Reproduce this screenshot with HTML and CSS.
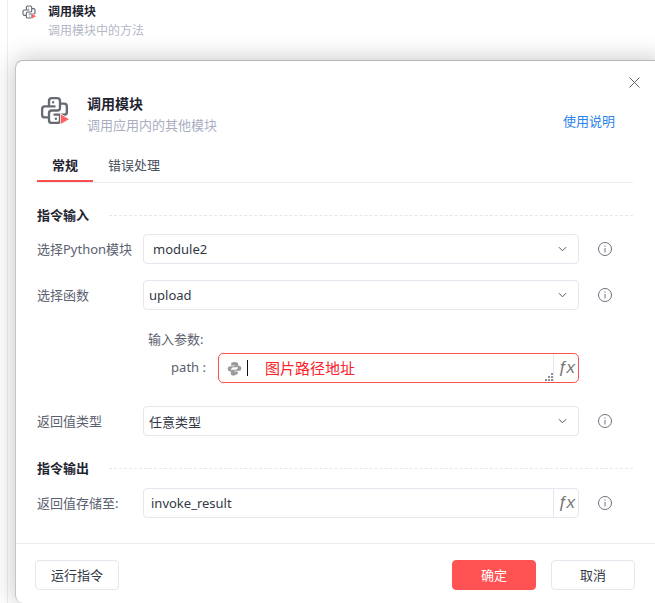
FILE: index.html
```html
<!DOCTYPE html>
<html lang="zh-CN">
<head>
<meta charset="utf-8">
<title>调用模块</title>
<link rel="stylesheet" href="styles.css">
</head>
<body>
<svg class="defs" width="0" height="0" aria-hidden="true">
  <defs>
    <symbol id="py" viewBox="0 0 24 24">
      <path d="M12 9h-7a2 2 0 0 0 -2 2v4a2 2 0 0 0 2 2h3M12 15h7a2 2 0 0 0 2 -2v-4a2 2 0 0 0 -2 -2h-3M8 9v-4a2 2 0 0 1 2 -2h4a2 2 0 0 1 2 2v5a2 2 0 0 1 -2 2h-4a2 2 0 0 0 -2 2v5a2 2 0 0 0 2 2h4a2 2 0 0 0 2 -2v-4M11 6v.01M13 18v.01" fill="none" stroke="#666a73" stroke-width="1.700" stroke-linecap="round" stroke-linejoin="round"/>
      <path d="M16.500 14.800l6 3.500-6 3.500z" fill="#fff" stroke="#fff" stroke-width="1"/>
      <path d="M16.500 14.800l6 3.500-6 3.500z" fill="#fb6464"/>
    </symbol>
    <symbol id="info" viewBox="0 0 14 14">
      <circle cx="7" cy="7" r="6.500" fill="none" stroke="#6c717d" stroke-width="1"/>
      <path d="M7 6v4.500M7 3.500v1.200" fill="none" stroke="#6c717d" stroke-width="1"/>
    </symbol>
    <symbol id="chev" viewBox="0 0 10 6">
      <path d="M1 1l4 4 4-4" fill="none" stroke="#4d5566" stroke-width="1.100"/>
    </symbol>
  </defs>
</svg>
<div class="page">
  <div class="item">
    <svg class="item-icon"><use href="#py"/></svg>
    <div>
      <div class="item-title">调用模块</div>
      <div class="item-sub">调用模块中的方法</div>
    </div>
  </div>
  <section class="modal">
    <svg class="close" viewBox="0 0 11 11"><path d="M.5.5l10 10M10.500.5l-10 10" fill="none" stroke="#666" stroke-width="1"/></svg>
    <div class="body">
      <header class="head">
        <svg class="head-icon"><use href="#py"/></svg>
        <div class="head-text">
          <div class="head-title">调用模块</div>
          <div class="head-sub">调用应用内的其他模块</div>
        </div>
        <a class="help">使用说明</a>
      </header>
      <nav class="tabs">
        <span class="tab active">常规</span>
        <span class="tab">错误处理</span>
      </nav>
      <div class="section first"><span>指令输入</span><i></i></div>
      <div class="row">
        <label class="label">选择Python模块</label>
        <div class="control select indent">module2<svg class="chev"><use href="#chev"/></svg></div>
        <svg class="info"><use href="#info"/></svg>
      </div>
      <div class="row gap">
        <label class="label">选择函数</label>
        <div class="control select">upload<svg class="chev"><use href="#chev"/></svg></div>
        <svg class="info"><use href="#info"/></svg>
      </div>
      <div class="params-title">输入参数:</div>
      <div class="param">
        <label class="param-label">path :</label>
        <div class="param-input">
          <svg class="py-solid" viewBox="0 0 24 24">
            <path d="M12 1.500c-3.600 0-5.400 1.200-5.400 3.200v2.600h5.700v1H5c-2.400 0-3.800 1.400-3.800 3.900 0 2.600 1.300 4.100 3.400 4.100h2.200v-2.700c0-2.100 1.600-3.600 3.600-3.600h4.700c1.700 0 2.900-1.300 2.900-3V4.700c0-2-2.400-3.200-6-3.200z" fill="#9a9a9a"/>
            <path d="M12 22.500c3.600 0 5.400-1.200 5.400-3.200v-2.600h-5.700v-1H19c2.400 0 3.800-1.400 3.800-3.900 0-2.600-1.300-4.100-3.400-4.100h-2.200v2.700c0 2.100-1.600 3.600-3.600 3.600H8.900c-1.700 0-2.900 1.300-2.900 3v3.300c0 2 2.400 3.200 6 3.200z" fill="#9a9a9a"/>
          </svg>
          <span class="caret"></span>
          <span class="red-text">图片路径地址</span>
          <svg class="grip" viewBox="0 0 8 8"><path d="M6 0h2v2H6zM3 3h2v2H3zM6 3h2v2H6zM0 6h2v2H0zM3 6h2v2H3zM6 6h2v2H6z" fill="#8a8f99"/></svg>
          <span class="fx fx-red">ƒx</span>
        </div>
      </div>
      <div class="row gap3">
        <label class="label">返回值类型</label>
        <div class="control select">任意类型<svg class="chev"><use href="#chev"/></svg></div>
        <svg class="info"><use href="#info"/></svg>
      </div>
      <div class="section second"><span>指令输出</span><i></i></div>
      <div class="row close-row">
        <label class="label">返回值存储至:</label>
        <div class="control input">invoke_result<span class="fx">ƒx</span></div>
        <svg class="info"><use href="#info"/></svg>
      </div>
    </div>
    <footer class="footer">
      <button class="btn">运行指令</button>
      <div class="actions">
        <button class="btn primary">确定</button>
        <button class="btn">取消</button>
      </div>
    </footer>
  </section>
</div>
</body>
</html>
```

FILE: styles.css
```css
* { box-sizing: border-box; }
html, body { margin: 0; padding: 0; background: #fff; }
body {
  font-family: "Noto Sans", "Noto Sans CJK SC", sans-serif;
  font-size: 13px;
  color: #333845;
}
.defs { position: absolute; }
.page {
  width: 655px;
  height: 603px;
  overflow: hidden;
  position: relative;
  background: linear-gradient(to right, #fff 7px, #eeeeee 7px, #eeeeee 8px, #fff 8px);
}
.item {
  height: 60px;
  padding: 3px 0 0 21px;
  display: flex;
  gap: 11px;
}
.item-icon { width: 16px; height: 16px; margin-top: 1px; }
.item-title { font-size: 12px; font-weight: 700; line-height: 17px; color: #1f2430; }
.item-sub { font-size: 12px; line-height: 17px; margin-top: 2px; color: #b3b7c6; }

.modal {
  position: relative;
  margin-left: 15px;
  width: 650px;
  height: 543px;
  background: #fff;
  border-radius: 8px;
  border-top: 1px solid #b8b8b8;
  border-left: 1px solid #c4c4c4;
  box-shadow: 0 0 26px rgba(0, 0, 0, .24);
  display: flex;
  flex-direction: column;
}
.close { position: absolute; top: 16px; left: 613px; width: 11px; height: 11px; }
.body { flex: 1; width: 617px; padding-left: 21px; }
.head {
  display: flex;
  padding-top: 33px;
  height: 89px;
}
.head-icon { width: 33px; height: 33px; margin-left: 1px; }
.head-text { margin-left: 16px; flex: 1; }
.head-title { font-size: 14px; font-weight: 700; line-height: 20px; color: #1f2430; }
.head-sub { font-size: 13px; line-height: 18px; margin-top: 2px; color: #a9aebf; }
.help { color: #2c84ea; font-size: 13px; line-height: 18px; margin: 18px 18px 0 0; }

.tabs {
  display: flex;
  height: 33px;
  border-bottom: 1px solid #ececf4;
}
.tab {
  height: 32px;
  width: 56px;
  text-align: center;
  margin-right: 15px;
  line-height: 30px;
  color: #4a505e;
}
.tab:last-child { width: 52px; }
.tab.active { color: #1f2430; font-weight: 700; border-bottom: 2px solid #fd4e4e; }

.section { display: flex; align-items: center; height: 16px; line-height: 16px; font-weight: 700; color: #1f2430; }
.section span { width: 72px; }
.section i { flex: 1; border-top: 1px dashed #e6e7ee; }
.section.first { margin-top: 24px; }
.section.second { margin-top: 24px; }

.row { display: flex; align-items: center; margin-top: 11px; height: 30px; }
.row.close-row { margin-top: 12px; }
.row.gap { margin-top: 16px; }
.row.gap3 { margin-top: 23px; }
.label { width: 106px; padding-bottom: 2px; color: #5b6170; white-space: nowrap; }
.control {
  width: 436px;
  height: 30px;
  border: 1px solid #e6e6ee;
  border-radius: 4px;
  display: flex;
  align-items: center;
  justify-content: space-between;
  color: #333845;
}
.select { padding: 0 11px 0 5px; }
.select.indent { padding-left: 9px; }
.input { padding-left: 7px; }
.chev { width: 9px; height: 6px; }
.info { width: 14px; height: 14px; margin-left: 19px; }

.params-title { margin: 21px 0 0 111px; line-height: 16px; color: #5b6170; }
.param { display: flex; align-items: center; margin-top: 6px; height: 30px; }
.param-label { width: 170px; padding: 0 1px 2px 0; text-align: right; color: #5b6170; white-space: nowrap; }
.param-input {
  position: relative;
  width: 361px;
  height: 30px;
  margin-left: 11px;
  border: 1px solid #fb5050;
  border-radius: 5px;
  display: flex;
  align-items: center;
  padding-left: 8px;
}
.py-solid { width: 15px; height: 15px; }
.caret { width: 1px; height: 16px; background: #111; margin-left: 5px; }
.red-text { color: #f8232b; font-size: 15px; margin-left: 17px; padding-bottom: 2px; flex: 1; }
.grip { position: absolute; right: 25px; bottom: 1px; width: 8px; height: 8px; }
.fx {
  width: 25px;
  height: 28px;
  border-left: 1px solid #e6e6ee;
  font-family: "Liberation Sans", sans-serif;
  font-style: italic;
  font-size: 17px;
  letter-spacing: -.5px;
  line-height: 27px;
  text-align: center;
  color: #777;
  flex: none;
}
.footer {
  height: 60px;
  padding: 16px 21px 0 19px;
  width: 640px;
  border-top: 1px solid #ececf1;
  display: flex;
  justify-content: space-between;
  align-items: flex-start;
}
.actions { display: flex; gap: 15px; }
.btn {
  width: 84px;
  height: 30px;
  padding: 0 0 2px;
  font: inherit;
  color: #333845;
  background: #fff;
  border: 1px solid #e6e6ee;
  border-radius: 4px;
}
.btn.primary { background: #ff5353; border-color: #ff5353; color: #fff; }
```
